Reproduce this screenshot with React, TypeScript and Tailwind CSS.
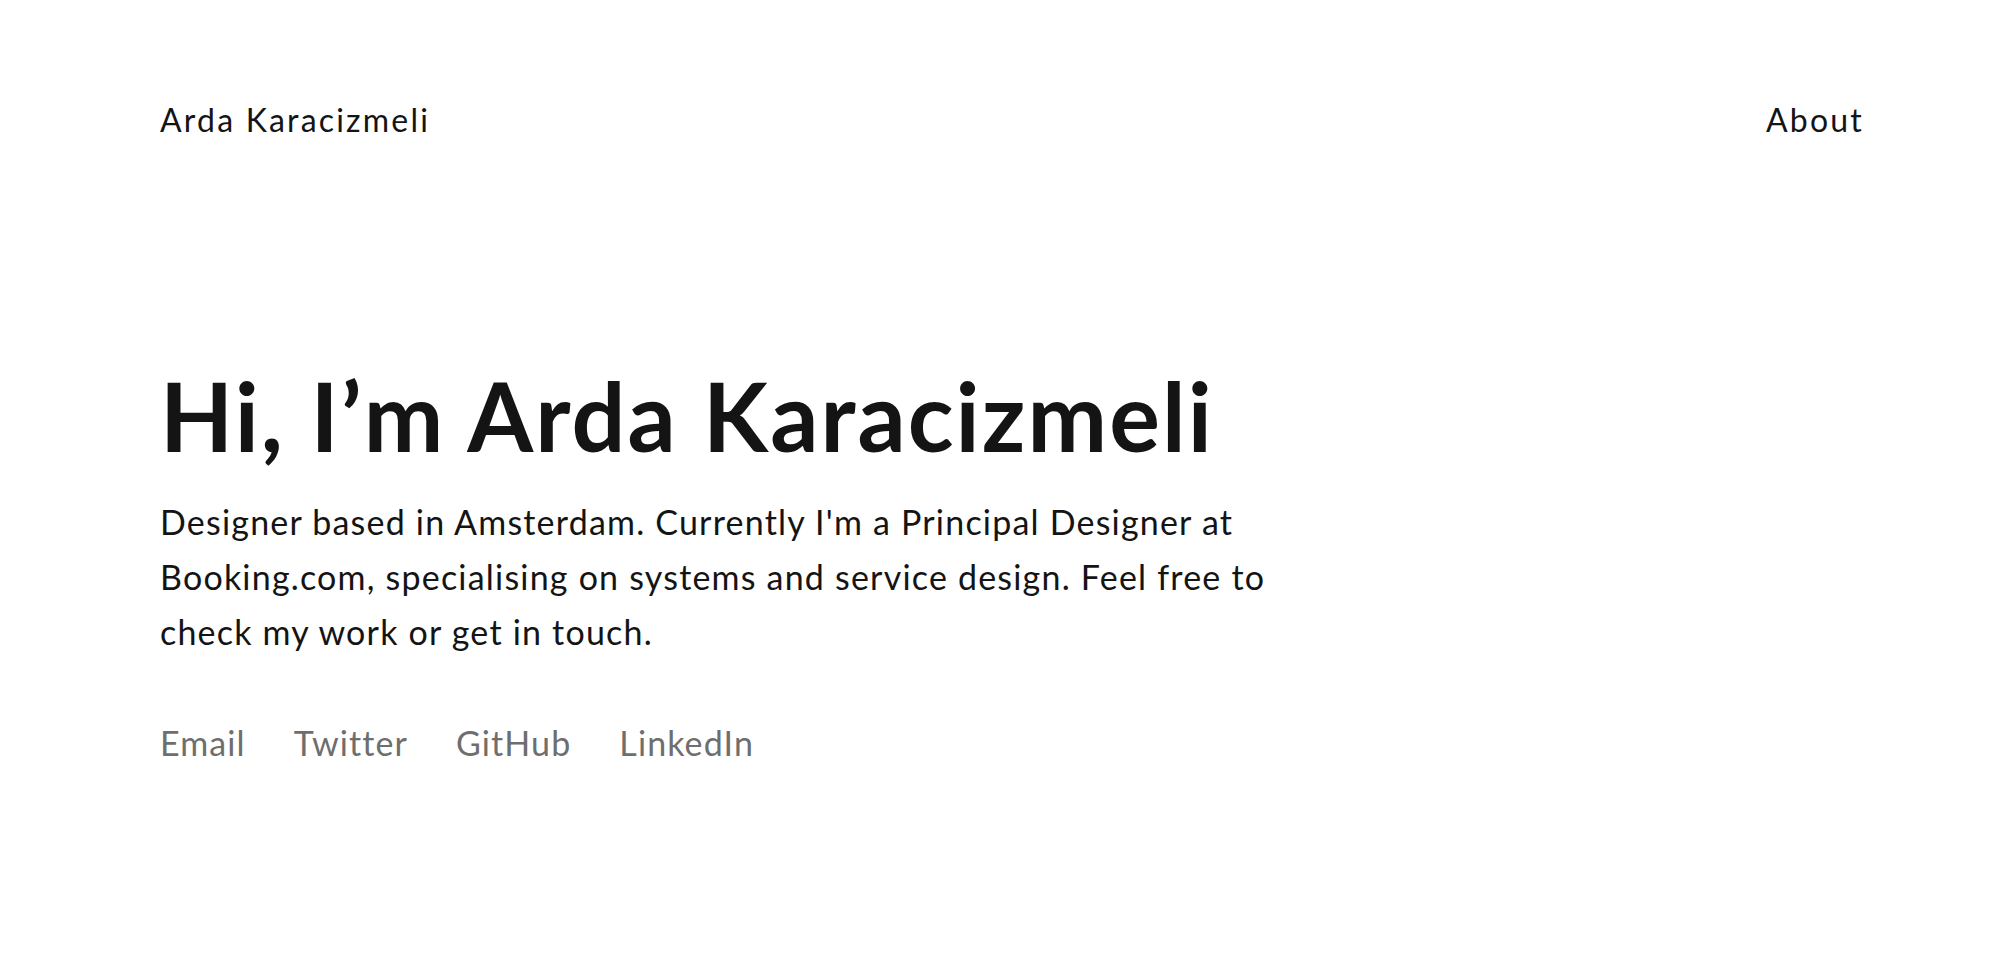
export default function App() {
  return (
    <div className="min-h-screen bg-white text-[#141414] font-['Lato',sans-serif]">
      {/* Top bar */}
      <header className="flex items-center justify-between pl-[160px] pr-[134px] pt-[101px]">
        <a href="#" className="text-[32px] leading-[1.2] tracking-[2.2px]">
          Arda Karacizmeli
        </a>
        <a href="#" className="text-[32px] leading-[1.2] tracking-[2.2px]">
          About
        </a>
      </header>

      {/* Intro */}
      <main className="pl-[160px] pt-[229px]">
        <h1 className="text-[95px] font-bold leading-none tracking-[2.1px]">
          Hi, I’m Arda Karacizmeli
        </h1>
        <p className="mt-[31px] max-w-[1150px] text-[34px] leading-[55px] tracking-[1.2px]">
          Designer based in Amsterdam. Currently I'm a Principal Designer at Booking.com, specialising on
          systems and service design. Feel free to check my work or get in touch.
        </p>
        <nav className="mt-[64px] flex gap-[48px] text-[34px] leading-[1.2] tracking-[1.1px] text-[#6e6e6e]">
          <a href="#">Email</a>
          <a href="#">Twitter</a>
          <a href="#">GitHub</a>
          <a href="#">LinkedIn</a>
        </nav>
      </main>
    </div>
  );
}
